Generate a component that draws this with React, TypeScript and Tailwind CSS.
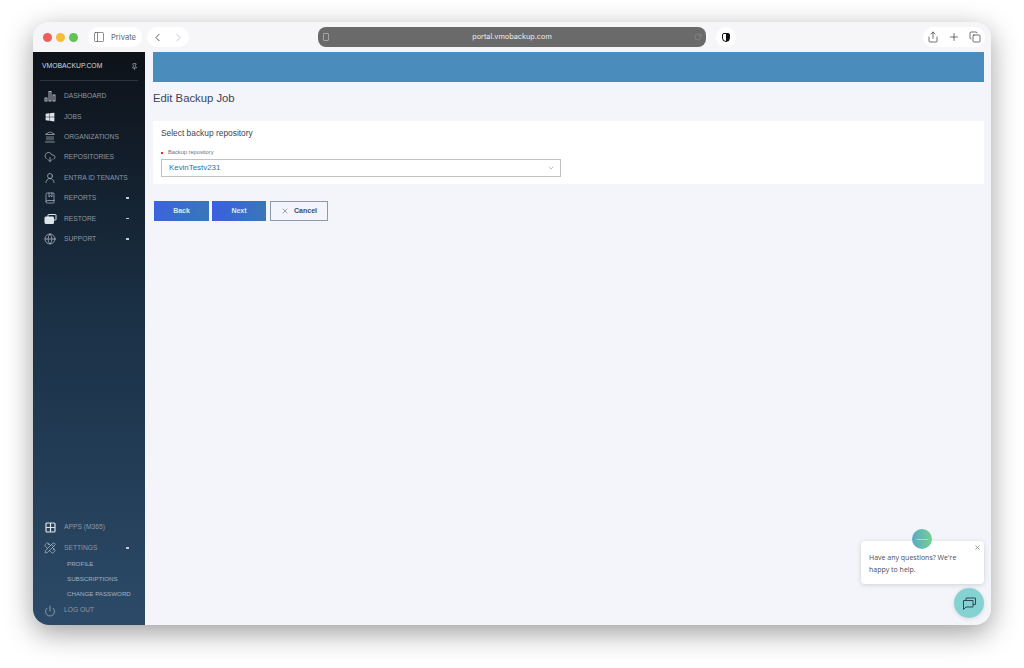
import {
  BookMarked,
  ChevronDown,
  ChevronLeft,
  ChevronRight,
  Copy,
  CloudDownload,
  Globe,
  Landmark,
  PanelLeft,
  PencilRuler,
  Pin,
  Plus,
  Power,
  RotateCw,
  Share,
  UserRound,
  X,
} from "lucide-react";
import { FaWindows } from "react-icons/fa";
import type { ReactNode } from "react";

const safari = "font-['Inter',sans-serif]";

function BarsIcon() {
  return (
    <svg width="12" height="12" viewBox="0 0 12 12" fill="none" stroke="#c0c8d2" strokeWidth="0.9">
      <rect x="1" y="8" width="2" height="3" />
      <rect x="5" y="1.5" width="2" height="9.5" />
      <rect x="9" y="5" width="2" height="6" />
    </svg>
  );
}

function RestoreIcon() {
  return (
    <svg width="13" height="12" viewBox="0 0 13 12" fill="none" stroke="#dfe4ea" strokeWidth="1">
      <rect x="4" y="1.5" width="8" height="5.5" rx="0.5" />
      <rect x="1" y="4" width="8.5" height="6.5" rx="0.5" fill="#dfe4ea" />
    </svg>
  );
}

function AppsIcon() {
  return (
    <svg width="11" height="11" viewBox="0 0 11 11" fill="none" stroke="#dfe4ea" strokeWidth="1.2">
      <rect x="1" y="1" width="9" height="9" rx="1" />
      <path d="M5.5 1v9M1 5.5h9" />
    </svg>
  );
}

function NavRow({ icon, label, caret, h = "h-[20.4px]" }: { icon: ReactNode; label: string; caret?: boolean; h?: string }) {
  return (
    <div className={`flex items-center pl-[10px] pr-[16px] ${h}`}>
      <span className="flex w-[14px] shrink-0 justify-center text-[#c5ccd5]">{icon}</span>
      <span className="ml-[7px] flex-1 whitespace-nowrap text-[6.7px] text-[#8d97a3]">{label}</span>
      {caret && <span className="h-[1.5px] w-[3px] bg-[#c5ccd5]" />}
    </div>
  );
}

function SubRow({ label }: { label: string }) {
  return <div className="flex h-[15px] items-center pl-[34px] text-[6.2px] whitespace-nowrap text-[#a3b1c0]">{label}</div>;
}

function Sidebar() {
  return (
    <aside className="flex w-[112px] shrink-0 flex-col bg-gradient-to-b from-[#0d1219] via-[#1a3045] via-45% to-[#2c4a68] pb-[5px] font-['Liberation_Sans',sans-serif]">
      <div className="mx-[7px] flex h-[29px] items-center justify-between border-b border-[#2c343d] pl-[2px] pt-[1px]">
        <span className="text-[6.8px] text-[#d5d9de]">VMOBACKUP.COM</span>
        <Pin size={7} className="text-[#c5ccd5]" />
      </div>
      <div className="mt-[5px]">
        <NavRow icon={<BarsIcon />} label="DASHBOARD" />
        <NavRow icon={<FaWindows size={10} className="text-[#dfe4ea]" />} label="JOBS" />
        <NavRow icon={<Landmark size={12} strokeWidth={1.3} />} label="ORGANIZATIONS" />
        <NavRow icon={<CloudDownload size={12} strokeWidth={1.3} />} label="REPOSITORIES" />
        <NavRow icon={<UserRound size={12} strokeWidth={1.3} />} label="ENTRA ID TENANTS" />
        <NavRow icon={<BookMarked size={12} strokeWidth={1.3} />} label="REPORTS" caret />
        <NavRow icon={<RestoreIcon />} label="RESTORE" caret />
        <NavRow icon={<Globe size={12} strokeWidth={1.3} />} label="SUPPORT" caret />
      </div>
      <div className="mt-auto">
        <NavRow icon={<AppsIcon />} label="APPS (M365)" />
        <NavRow icon={<PencilRuler size={12} strokeWidth={1.3} />} label="SETTINGS" caret />
        <div className="-mt-[2px]">
          <SubRow label="PROFILE" />
          <SubRow label="SUBSCRIPTIONS" />
          <SubRow label="CHANGE PASSWORD" />
        </div>
        <NavRow icon={<Power size={12} strokeWidth={1.2} />} label="LOG OUT" h="h-[19px]" />
      </div>
    </aside>
  );
}

function TitleBar() {
  return (
    <div className={`flex h-[30px] shrink-0 items-center bg-[#f6f6f9] pl-[10px] pr-[6px] ${safari}`}>
      <div className="flex gap-[4px]">
        <span className="size-[9px] rounded-full bg-[#ee5f5b]" />
        <span className="size-[9px] rounded-full bg-[#f4bd3c]" />
        <span className="size-[9px] rounded-full bg-[#5ec454]" />
      </div>
      <div className="ml-[10px] flex h-[20px] w-[54px] items-center gap-[6px] rounded-[10px] bg-white pl-[5px]">
        <PanelLeft size={12} strokeWidth={1.2} className="text-[#444]" />
        <span className="pt-[1px] text-[7.6px] text-[#666]">Private</span>
      </div>
      <div className="ml-[5px] flex h-[20px] w-[42px] items-center justify-between rounded-[10px] bg-white px-[4px]">
        <ChevronLeft size={13} strokeWidth={1.5} className="text-[#333]" />
        <ChevronRight size={13} strokeWidth={1.2} className="text-[#aaa]" />
      </div>
      <div className="relative ml-[129px] flex h-[20px] w-[388px] items-center justify-center rounded-[8px] bg-[#6a6a6a]">
        <span className="pt-[1px] text-[7.3px] text-[#eeeeee]">portal.vmobackup.com</span>
        <span className="absolute left-[5px] top-[6px] h-[8px] w-[6px] rounded-[1px] border border-[#a5a5a5]" />
        <RotateCw size={8} strokeWidth={1.1} className="absolute right-[4px] top-[6px] text-[#a5a5a5]" />
      </div>
      <div className="ml-[10px] flex size-[20px] items-center justify-center rounded-full bg-white">
        <span className="h-[9px] w-[8px] rounded-b-[4px] rounded-t-[2px] border border-[#111] bg-gradient-to-r from-white from-50% to-[#111] to-50%" />
      </div>
      <div className="ml-auto flex h-[20px] w-[62px] items-center justify-between rounded-[10px] bg-white px-[4px]">
        <Share size={12} strokeWidth={1.4} className="text-[#333]" />
        <Plus size={12} strokeWidth={1.4} className="text-[#333]" />
        <Copy size={12} strokeWidth={1.4} className="text-[#333]" />
      </div>
    </div>
  );
}

function Content() {
  return (
    <main className="flex-1 pl-[8px] pr-[7px] font-['Liberation_Sans',sans-serif]">
      <div className="h-[30px] bg-[#4a8dbd]" />
      <h1 className="mt-[9px] h-[30px] text-[11.3px] leading-[14px] text-[#3d4454]">Edit Backup Job</h1>
      <section className="h-[63px] bg-white px-[8px] pt-[7px]">
        <h2 className="text-[8.4px] leading-[11px] text-[#3d4454]">Select backup repository</h2>
        <label className="mt-[10px] flex h-[7px] items-center text-[5.7px] text-[#6b7280]">
          <span className="mr-[5px] size-[2px] bg-[#d9332f]" />
          Backup repository
        </label>
        <div className="mt-[3px] flex h-[18px] w-[400px] items-center justify-between border border-[#c0c2c6] pl-[7px] pr-[5px]">
          <span className="text-[7.9px] text-[#2277b5]">KevinTestv231</span>
          <ChevronDown size={8} className="text-[#9aa3ad]" />
        </div>
      </section>
      <div className="mt-[17px] ml-[1px] flex">
        <button className="h-[20px] w-[55px] bg-gradient-to-r from-[#3b63dc] to-[#3a76b8] text-[7px] font-bold text-[#dfe7f5]">Back</button>
        <button className="ml-[3px] h-[20px] w-[54px] bg-gradient-to-r from-[#3b5fdf] to-[#3a76b8] text-[7px] font-bold text-[#dfe7f5]">Next</button>
        <button className="ml-[4px] flex h-[20px] w-[58px] items-center justify-center gap-[5px] border border-[#8e98ad] text-[7px] font-bold text-[#3d4a6b]">
          <X size={8} strokeWidth={1.5} />
          Cancel
        </button>
      </div>
    </main>
  );
}

function ChatWidget() {
  return (
    <>
      <div className="absolute left-[828px] top-[519px] flex h-[43px] w-[123px] flex-col justify-center rounded-[4px] bg-white pl-[8px] pt-[3px] font-['Open_Sans',sans-serif] text-[7px] leading-[12px] text-[#4a4f57] shadow-[0_1px_5px_rgba(0,0,0,0.15)]">
        <span>Have any questions? We're</span>
        <span>happy to help.</span>
        <X size={7} className="absolute right-[3px] top-[3px] text-[#666]" />
      </div>
      <div className="absolute left-[879px] top-[507px] flex size-[20px] items-center justify-center rounded-full bg-gradient-to-r from-[#5aa9c4] to-[#74cf8e]">
        <span className="text-[2px] text-white">VMOBACKUP</span>
      </div>
      <div className="absolute left-[921px] top-[566px] flex size-[30px] items-center justify-center rounded-full bg-[#85d2d2] shadow-[0_1px_4px_rgba(0,0,0,0.12)]">
        <svg width="15" height="15" viewBox="0 0 15 15" fill="none" stroke="#2f4858" strokeWidth="1">
          <path d="M1.5 4.5h9.5v6.5H4l-2.5 2.5z" />
          <path d="M4 4.5V2h9.5v6.5H11" />
        </svg>
      </div>
    </>
  );
}

export default function App() {
  return (
    <div className="h-[668px] w-[1024px] overflow-hidden bg-white pl-[33px] pt-[22px]">
      <div className="relative flex h-[603px] w-[958px] flex-col overflow-hidden rounded-[16px] bg-[#f3f5fa] shadow-[0_8px_28px_rgba(0,0,0,0.38)]">
        <TitleBar />
        <div className="flex flex-1">
          <Sidebar />
          <Content />
        </div>
        <ChatWidget />
      </div>
    </div>
  );
}
